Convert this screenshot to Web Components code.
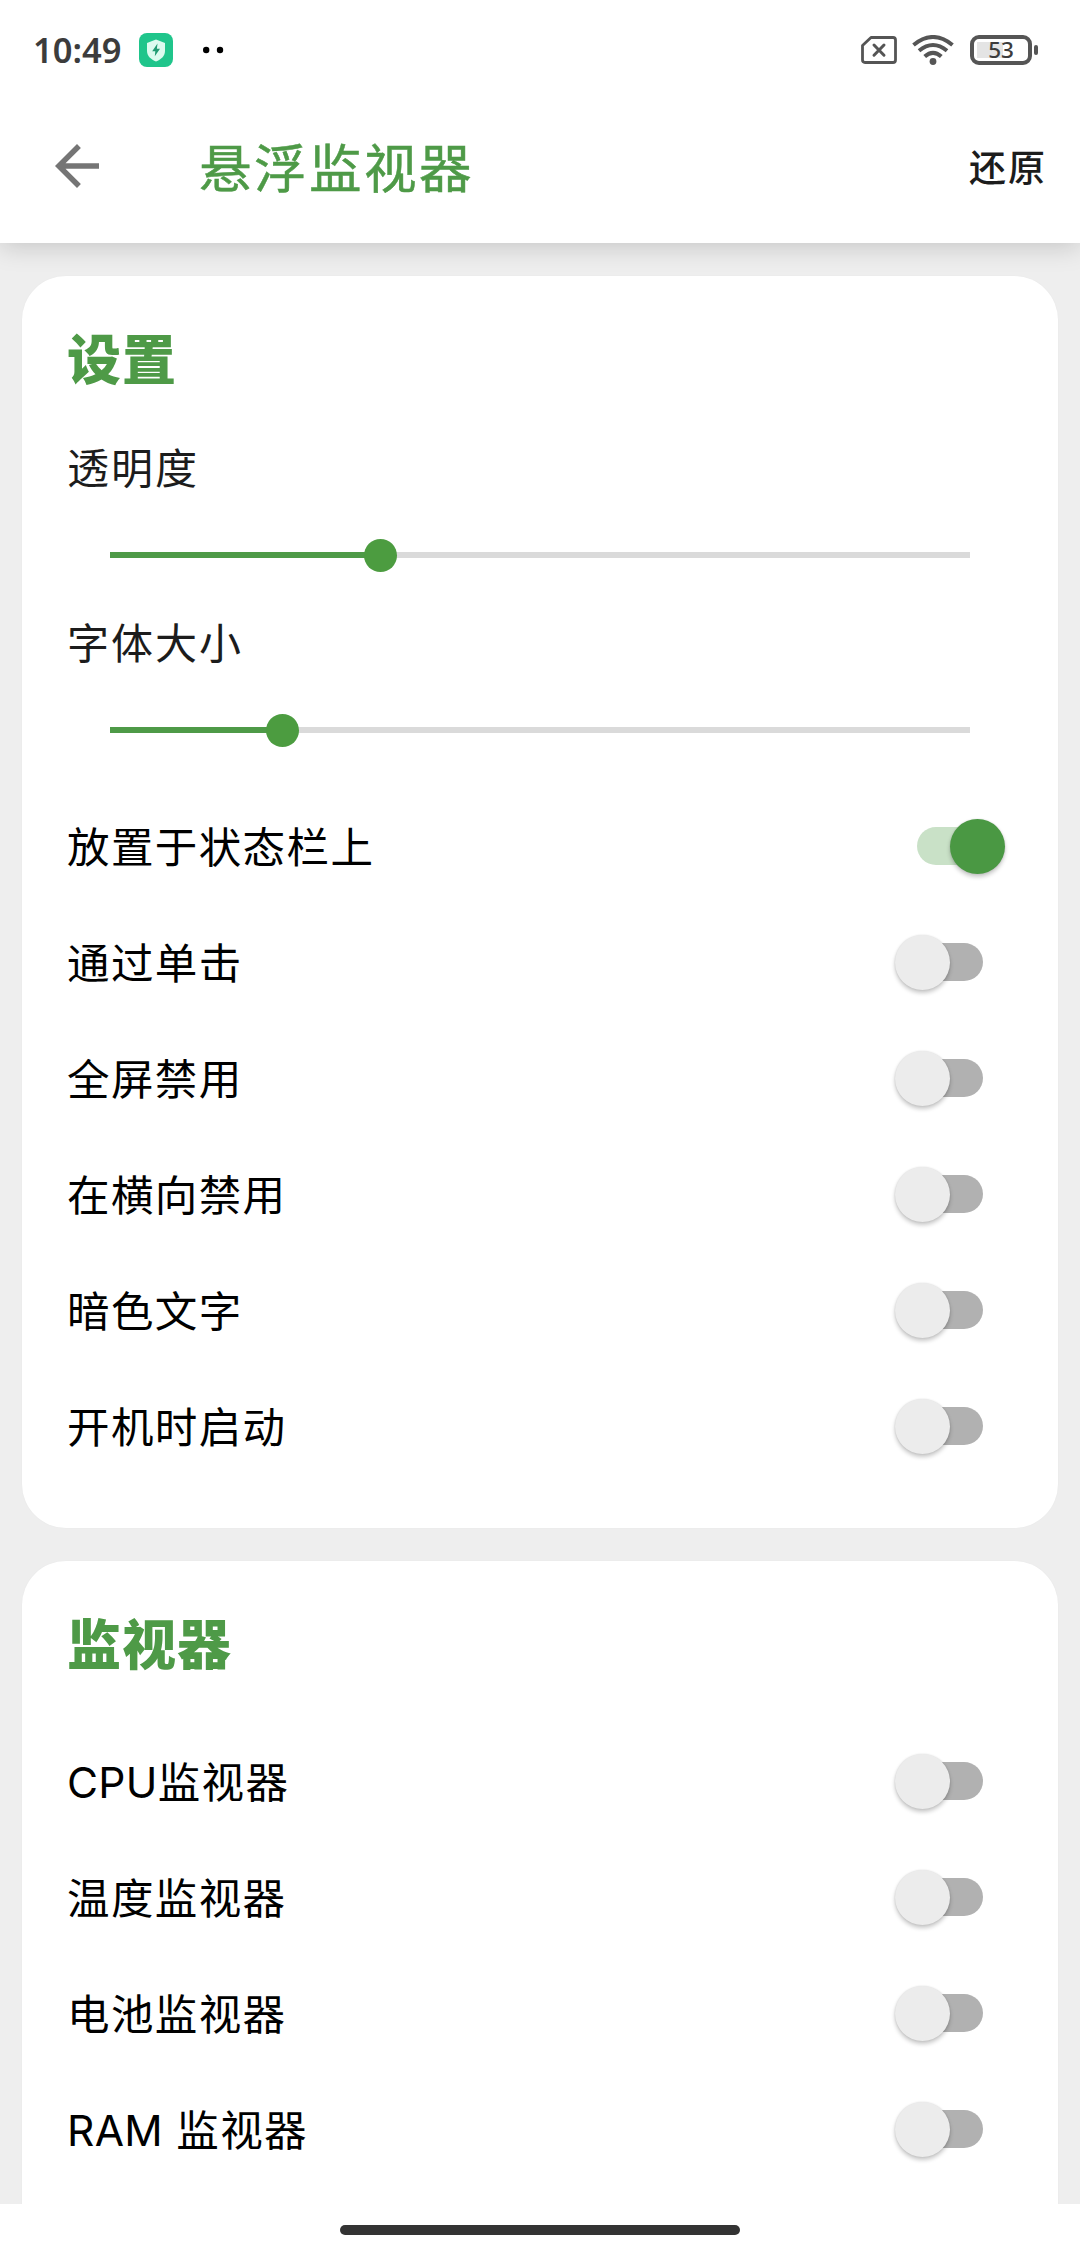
<!DOCTYPE html>
<html lang="zh-CN">
<head>
  <meta charset="utf-8">
  <title>悬浮监视器</title>
  <style>
    html,
    body {
      margin: 0;
      height: 100%;
    }

    body {
      --accent: #4e9a47;
      display: flex;
      flex-direction: column;
      height: 2248px;
      overflow: hidden;
      background: #fff;
      color: #000;
      font-family: "Noto Sans", "Noto Sans CJK SC", sans-serif;
    }

    main {
      flex: 1;
      min-height: 0;
      box-sizing: border-box;
      display: flex;
      flex-direction: column;
      gap: 33px;
      padding: 33px 22px 0;
      overflow: hidden;
      background: #eee;
    }

    /* the last card runs on below the fold */
    settings-card:last-child {
      min-height: 700px;
    }

    /* latin words are set tighter than the han text */
    settings-switch span {
      letter-spacing: 0.3px;
    }
  </style>
</head>
<body>
  <status-bar time="10:49" battery="53"></status-bar>
  <app-toolbar>
    悬浮监视器
    <span slot="action">还原</span>
  </app-toolbar>

  <main>
    <settings-card heading="设置">
      <settings-slider value="31.4">透明度</settings-slider>
      <settings-slider value="20">字体大小</settings-slider>
      <settings-switch checked>放置于状态栏上</settings-switch>
      <settings-switch>通过单击</settings-switch>
      <settings-switch>全屏禁用</settings-switch>
      <settings-switch>在横向禁用</settings-switch>
      <settings-switch>暗色文字</settings-switch>
      <settings-switch>开机时启动</settings-switch>
    </settings-card>

    <settings-card heading="监视器">
      <settings-switch><span>CPU</span>监视器</settings-switch>
      <settings-switch>温度监视器</settings-switch>
      <settings-switch>电池监视器</settings-switch>
      <settings-switch><span>RAM</span> 监视器</settings-switch>
    </settings-card>
  </main>

  <home-indicator></home-indicator>

  <script>
    'use strict';

    customElements.define('status-bar', class extends HTMLElement {
      constructor() {
        super();

        this.root = this.attachShadow({mode: 'open'});

        this.root.innerHTML = `
          <style>
            :host {
              display: flex;
              align-items: center;
              justify-content: space-between;
              flex: none;
              box-sizing: border-box;
              height: 100px;
              padding: 0 42px 0 33px;
              color: #3c3c3c;
            }

            .side {
              display: flex;
              align-items: center;
            }

            .time {
              width: 106px;
              font-size: 34.5px;
              font-weight: 600;
              line-height: 40px;
            }

            .dots {
              margin-left: 30px;
            }

            .wifi {
              margin: 0 16px 0 15px;
            }

            .battery {
              display: flex;
              align-items: center;
              gap: 2px;
            }

            .level {
              box-sizing: border-box;
              width: 62px;
              height: 30px;
              border: 4px solid #555;
              border-radius: 9px;
              background: linear-gradient(#e4e4e4, #e4e4e4) 3px 50% / 26px 16px no-repeat;
              font-size: 22.5px;
              font-weight: 500;
              line-height: 22px;
              text-align: center;
            }

            .nub {
              width: 4px;
              height: 10px;
              border-radius: 2px;
              background: #555;
            }

            svg {
              display: block;
            }
          </style>

          <div class="side">
            <span class="time"></span>
            <svg width="34" height="34" viewBox="0 0 34 34">
              <rect width="34" height="34" rx="8" fill="#1fc58b"/>
              <path d="M17 6.5 L26 10 V18 C26 23 22 26.5 17 28.5 C12 26.5 8 23 8 18 V10 Z" fill="#dcfbef"/>
              <path d="M18.5 10.5 L13.2 18.3 H16.3 L15.8 23.2 L21 15.8 H17.9 Z" fill="#219b72"/>
            </svg>
            <svg class="dots" width="22" height="8" viewBox="0 0 22 8">
              <circle cx="3.2" cy="4" r="3.2"/>
              <circle cx="17" cy="4" r="3.2"/>
            </svg>
          </div>

          <div class="side">
            <svg width="36" height="28" viewBox="0 0 36 28" fill="none" stroke="#555" stroke-width="2.8">
              <path d="M10 1.5 H32 Q34.5 1.5 34.5 4 V24 Q34.5 26.5 32 26.5 H4 Q1.5 26.5 1.5 24 V9.5 Z" stroke-linejoin="round"/>
              <path d="M13 9 L23 19.2 M23 9 L13 19.2" stroke-width="3" stroke-linecap="round"/>
            </svg>
            <svg class="wifi" width="42" height="30" viewBox="0 0 42 30" fill="none" stroke="#555" stroke-width="4">
              <path d="M1.5 10 Q21 -6 40.5 10"/>
              <path d="M7 15.8 Q21 4.2 35 15.8"/>
              <path d="M12.7 21.6 Q21 14 29.3 21.6"/>
              <circle cx="21" cy="26.5" r="3.4" fill="#555" stroke="none"/>
            </svg>
            <div class="battery">
              <div class="level"></div>
              <div class="nub"></div>
            </div>
          </div>
        `;
      }

      connectedCallback() {
        this.root.querySelector('.time').textContent = this.getAttribute('time');
        this.root.querySelector('.level').textContent = this.getAttribute('battery');
      }
    });

    customElements.define('app-toolbar', class extends HTMLElement {
      constructor() {
        super();

        this.root = this.attachShadow({mode: 'open'});

        this.root.innerHTML = `
          <style>
            :host {
              display: flex;
              align-items: center;
              flex: none;
              box-sizing: border-box;
              position: relative;
              z-index: 1;
              height: 143px;
              padding: 0 33px 11px 44px;
              background: #fff;
              box-shadow: 0 4px 24px rgba(0, 0, 0, 0.17);
              /* keep the shadow below the bar only */
              clip-path: inset(0 0 -40px 0);
            }

            svg {
              flex: none;
              margin-right: 89px;
            }

            .title {
              flex: 1;
              padding-top: 4px;
              color: var(--accent);
              font-size: 52.5px;
              letter-spacing: 2.5px;
              line-height: 76px;
              white-space: nowrap;
              -webkit-text-stroke: 0.5px var(--accent);
            }

            .action {
              padding-top: 3px;
              color: #1c1c1c;
              font-size: 37px;
              font-weight: 500;
              letter-spacing: 2px;
              line-height: 54px;
            }
          </style>

          <svg width="66" height="66" viewBox="0 0 24 24" fill="#757575">
            <path d="M20 11H7.83l5.59-5.59L12 4l-8 8 8 8 1.41-1.41L7.83 13H20v-2z"/>
          </svg>
          <div class="title"><slot></slot></div>
          <div class="action"><slot name="action"></slot></div>
        `;
      }
    });

    customElements.define('settings-card', class extends HTMLElement {
      constructor() {
        super();

        this.root = this.attachShadow({mode: 'open'});

        this.root.innerHTML = `
          <style>
            :host {
              display: flex;
              flex-direction: column;
              flex: none;
              padding: 44px;
              border-radius: 44px;
              background: #fff;
              box-shadow: 0 0 2px rgba(0, 0, 0, 0.03);
            }

            h2 {
              margin: 4px 0 43px 1px;
              color: var(--accent);
              font-size: 54px;
              font-weight: 900;
              letter-spacing: 1px;
              line-height: 71px;
            }
          </style>

          <h2></h2>
          <slot></slot>
        `;
      }

      connectedCallback() {
        this.root.querySelector('h2').textContent = this.getAttribute('heading');
      }
    });

    customElements.define('settings-slider', class extends HTMLElement {
      constructor() {
        super();

        this.root = this.attachShadow({mode: 'open'});

        this.root.innerHTML = `
          <style>
            :host {
              display: block;
              box-sizing: border-box;
              height: 175px;
              padding-top: 8px;
            }

            .label {
              padding-left: 1px;
              color: #1c1c1c;
              font-size: 42px;
              letter-spacing: 2px;
              line-height: 44px;
            }

            .bar {
              display: flex;
              align-items: center;
              height: 34px;
              margin: 48px 44px 0;
            }

            .filled,
            .rest {
              height: 6px;
            }

            .filled {
              width: var(--value);
              background: var(--accent);
            }

            .thumb {
              flex: none;
              width: 33px;
              height: 33px;
              margin: 0 -16.5px;
              border-radius: 50%;
              background: #4c9c40;
              z-index: 1;
            }

            .rest {
              flex: 1;
              background: #dadada;
            }
          </style>

          <div class="label"><slot></slot></div>
          <div class="bar">
            <div class="filled"></div>
            <div class="thumb"></div>
            <div class="rest"></div>
          </div>
        `;
      }

      static get observedAttributes() {
        return ['value'];
      }

      attributeChangedCallback(name, oldValue, newValue) {
        this.root.querySelector('.bar').style.setProperty('--value', `${newValue}%`);
      }
    });

    customElements.define('settings-switch', class extends HTMLElement {
      constructor() {
        super();

        this.root = this.attachShadow({mode: 'open'});

        this.root.innerHTML = `
          <style>
            :host {
              display: flex;
              align-items: center;
              justify-content: space-between;
              height: 116px;
              padding-right: 9px;
              font-family: Inter, "Noto Sans CJK SC", sans-serif;
              font-size: 42.5px;
              letter-spacing: 1.4px;
              line-height: 60px;
            }

            .label {
              padding: 3px 0 0 1px;
            }

            .switch {
              display: grid;
              align-items: center;
              width: 110px;
              height: 56px;
            }

            .track,
            .thumb {
              grid-area: 1 / 1;
            }

            .track {
              justify-self: center;
              width: 66px;
              height: 38px;
              border-radius: 19px;
              background: #b1b1b1;
            }

            .thumb {
              justify-self: start;
              width: 55px;
              height: 55px;
              border-radius: 50%;
              background: #ececec;
              box-shadow: 0 3px 4px rgba(0, 0, 0, 0.22), 0 0 2px rgba(0, 0, 0, 0.12);
            }

            :host([checked]) .track {
              background: #c9e1c7;
            }

            :host([checked]) .thumb {
              justify-self: end;
              background: #4a9843;
            }
          </style>

          <div class="label"><slot></slot></div>
          <div class="switch">
            <div class="track"></div>
            <div class="thumb"></div>
          </div>
        `;
      }

      get checked() {
        return this.hasAttribute('checked');
      }

      set checked(val) {
        if (val) {
          this.setAttribute('checked', '');
        } else {
          this.removeAttribute('checked');
        }
      }

      connectedCallback() {
        this.addEventListener('click', () => {
          this.checked = !this.checked;
        });
      }
    });

    customElements.define('home-indicator', class extends HTMLElement {
      constructor() {
        super();

        this.root = this.attachShadow({mode: 'open'});

        this.root.innerHTML = `
          <style>
            :host {
              display: flex;
              justify-content: center;
              flex: none;
              box-sizing: border-box;
              height: 44px;
              padding-top: 21px;
              background: #fff;
            }

            div {
              width: 400px;
              height: 10px;
              border-radius: 5px;
              background: #333;
            }
          </style>

          <div></div>
        `;
      }
    });
  </script>
</body>
</html>
